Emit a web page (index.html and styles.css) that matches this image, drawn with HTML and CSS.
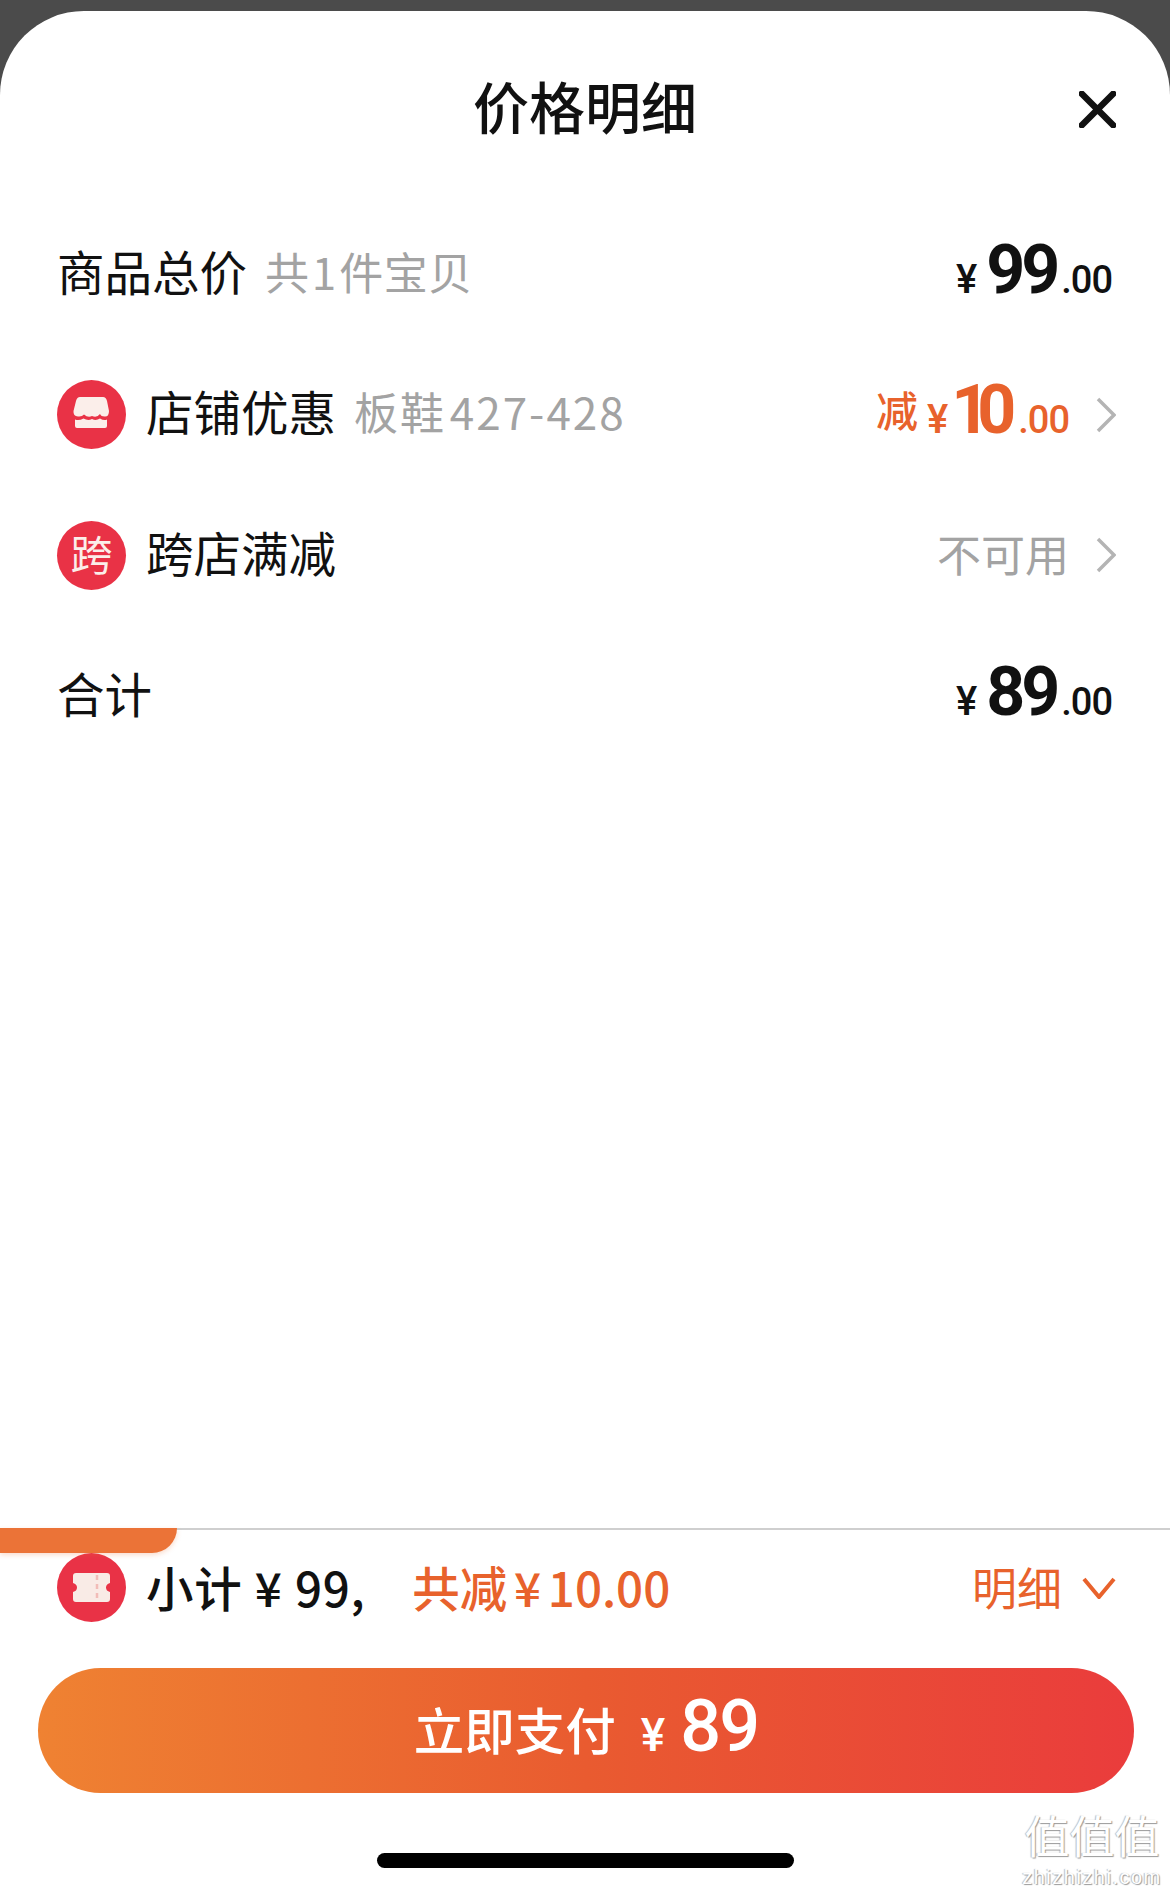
FILE: index.html
```html
<!DOCTYPE html>
<html lang="zh-CN">
    <head>
        <meta charset="utf-8" />
        <title>价格明细</title>
        <link rel="stylesheet" href="styles.css">
    </head>
    <body>
        <div class="sheet">
            <div class="sheet-head">
                <h1 class="sheet-tit">价格明细</h1>
                <svg class="close" viewBox="0 0 40 40"><path d="M3 3 L37 37 M37 3 L3 37" /></svg>
            </div>

            <div class="row">
                <span class="row-name">商品总价</span>
                <span class="row-sub">共 1 件宝贝</span>
                <span class="price">
                    <span class="yen">¥</span><span class="int">99</span><span class="dec">.00</span>
                </span>
            </div>

            <div class="row">
                <svg class="badge" viewBox="0 0 69 69">
                    <circle cx="34.5" cy="34.5" r="34.5" fill="#e93246" />
                    <path fill="#fbeeea" d="M23 17 H46 Q49 17 50 21 L52 31 Q52 37 47.500 36.500 Q44 36.500 43 34 Q40 38 35 36 Q31 38 27 34.500 Q25 37 21 36.500 Q16 36 16.500 31 L19 21 Q20 17 23 17 Z" />
                    <path fill="#fbeeea" d="M18 39.500 Q22 41 26.500 38.500 Q31 41 35 39 Q39 41 43 38.500 Q47 41 50 39.500 V46 Q50 48 48 48 H20 Q18 48 18 46 Z" />
                </svg>
                <span class="row-name">店铺优惠</span>
                <span class="row-sub row-sub-num">板鞋 427-428</span>
                <span class="price price-off">
                    <span class="off">减</span><span class="yen">¥</span><span class="int int-one">10</span><span class="dec">.00</span>
                </span>
                <svg class="arrow" viewBox="0 0 20 36"><path d="M2 2 L18 18 L2 34" /></svg>
            </div>

            <div class="row">
                <span class="badge badge-txt">跨</span>
                <span class="row-name">跨店满减</span>
                <span class="row-none">不可用</span>
                <svg class="arrow" viewBox="0 0 20 36"><path d="M2 2 L18 18 L2 34" /></svg>
            </div>

            <div class="row">
                <span class="row-name">合计</span>
                <span class="price">
                    <span class="yen">¥</span><span class="int">89</span><span class="dec">.00</span>
                </span>
            </div>

            <div class="foot">
                <div class="foot-tab"></div>
                <div class="summary">
                    <svg class="badge" viewBox="0 0 69 69">
                        <circle cx="34.5" cy="34.5" r="34.5" fill="#e93246" />
                        <path fill="#f9ebe6" d="M19 20 H50 Q53 20 53 23 V30 Q49 31 49 34.500 Q49 38 53 39 V46 Q53 49 50 49 H19 Q16 49 16 46 V39 Q20 38 20 34.500 Q20 31 16 30 V23 Q16 20 19 20 Z" />
                        <path stroke="#f2bcb8" stroke-width="2.500" stroke-dasharray="5 4" d="M40 22 V48" />
                    </svg>
                    <span class="sum-total">小计 ¥ 99,</span>
                    <span class="sum-off">共减 ¥ 10.00</span>
                    <span class="sum-more">明细</span>
                    <svg class="sum-arrow" viewBox="0 0 34 22"><path d="M2 2 L17 20 L32 2" /></svg>
                </div>
                <div class="pay">
                    <span class="pay-txt">立即支付</span><span class="pay-yen">¥</span><span class="pay-num">89</span>
                </div>
                <div class="home-bar"></div>
            </div>

            <div class="mark">
                <div class="mark-cn">值值值</div>
                <div class="mark-en">zhizhizhi.com</div>
            </div>
        </div>
    </body>
</html>
```

FILE: styles.css
```css
* {
    margin: 0;
    padding: 0;
    box-sizing: border-box;
}

body {
    width: 1170px;
    height: 1892px;
    overflow: hidden;
    padding-top: 11px;
    background-color: #4b4b4b;
    color: #111;
    font-family: "Noto Sans CJK SC", "Liberation Sans", sans-serif;
}

.sheet {
    position: relative;
    display: flex;
    flex-direction: column;
    height: 1881px;
    overflow: hidden;
    border-radius: 84px 84px 0 0;
    background-color: #fff;
}

.sheet-head {
    position: relative;
    display: flex;
    justify-content: center;
    align-items: center;
    height: 193px;
    padding-bottom: 4px;
}

.sheet-tit {
    font-size: 56px;
    font-weight: 500;
    line-height: 70px;
    margin-top: -2px;
}

.close {
    position: absolute;
    top: 80px;
    right: 54px;
    width: 37px;
    height: 37px;
    fill: none;
    stroke: #111;
    stroke-width: 7;
    stroke-linecap: round;
}

.row {
    display: flex;
    align-items: center;
    height: 140.6px;
    padding: 0 54px 0 57px;
}

.row-name {
    margin-bottom: 7px;
    font-size: 47.500px;
    line-height: 60px;
}

.row-sub {
    margin-left: 18px;
    margin-bottom: 7px;
    color: #a3a3a3;
    font-size: 44px;
    line-height: 60px;
    letter-spacing: 0.500px;
    word-spacing: -8px;
}

.row-sub-num {
    letter-spacing: 2px;
}

.row-none {
    margin-left: auto;
    margin-bottom: 4px;
    color: #a3a3a3;
    font-size: 44px;
    line-height: 60px;
}

.badge {
    flex: none;
    width: 69px;
    height: 69px;
    margin-right: 20px;
}

.badge-txt {
    border-radius: 50%;
    background-color: #e93246;
    color: #fbeeea;
    font-size: 42px;
    line-height: 64px;
    text-align: center;
}

.price {
    display: flex;
    align-items: baseline;
    margin-left: auto;
    margin-bottom: 9px;
    padding-right: 4px;
    font-family: "Roboto", "Liberation Sans", sans-serif;
    font-weight: 700;
}

.yen {
    font-size: 40px;
    font-weight: 500;
    margin-right: 9px;
}

.int {
    font-size: 68px;
    line-height: 80px;
    letter-spacing: -4px;
}

.int-one {
    margin-left: -6px;
    margin-right: 10px;
    letter-spacing: -13px;
}

.dec {
    font-size: 38px;
    font-weight: 500;
    margin-left: 5px;
    letter-spacing: -1px;
}

.price-off {
    padding-right: 0;
    color: #e8622c;
}

.off {
    margin-right: 9px;
    font-family: "Noto Sans CJK SC", sans-serif;
    font-size: 42px;
    font-weight: 500;
    transform: translateY(-6px);
}

.arrow {
    flex: none;
    width: 20px;
    height: 36px;
    margin-left: 27px;
    fill: none;
    stroke: #b4b4b4;
    stroke-width: 3.500;
}

.foot {
    position: relative;
    margin-top: auto;
    height: 364px;
    border-top: 2px solid #cfcfcf;
}

.foot-tab {
    position: absolute;
    top: -2px;
    left: 0;
    width: 177px;
    height: 25px;
    border-radius: 0 0 28px 0;
    background-color: #eb7337;
    box-shadow: 0 2px 5px rgba(235, 115, 55, 0.25);
}

.summary {
    display: flex;
    align-items: center;
    height: 69px;
    margin-top: 23px;
    padding: 0 54px 0 57px;
}

.sum-total {
    margin-bottom: 3px;
    font-size: 47.500px;
    font-weight: 500;
    letter-spacing: 0.700px;
    word-spacing: 1px;
}

.sum-off {
    margin-left: 47px;
    margin-bottom: 3px;
    color: #e8622c;
    font-size: 47.500px;
    font-weight: 500;
    word-spacing: -4px;
}

.sum-more {
    margin-left: auto;
    margin-bottom: 3px;
    color: #e8622c;
    font-size: 45px;
}

.sum-arrow {
    flex: none;
    width: 34px;
    height: 22px;
    margin-left: 20px;
    fill: none;
    stroke: #e8622c;
    stroke-width: 4;
}

.pay {
    display: flex;
    justify-content: center;
    align-items: center;
    width: 1096px;
    height: 125px;
    margin: 46px 0 0 38px;
    border-radius: 63px;
    background: linear-gradient(90deg, #ef8232, #e95b30 50%, #ea3c3c 100%);
    color: #fff;
}

.pay-txt {
    margin-bottom: 6px;
    font-size: 50.500px;
    font-weight: 500;
}

.pay-yen {
    margin-left: 25px;
    margin-top: 8px;
    font-family: "Roboto", sans-serif;
    font-size: 46px;
    font-weight: 500;
}

.pay-num {
    margin-left: 15px;
    margin-bottom: 8px;
    font-family: "Roboto", sans-serif;
    font-size: 72px;
    font-weight: 500;
    line-height: 80px;
    letter-spacing: -2px;
}

.home-bar {
    width: 417px;
    height: 15px;
    margin: 60px auto 0;
    border-radius: 8px;
    background-color: #000;
}

.mark {
    position: absolute;
    right: 8px;
    bottom: 6px;
    width: 140px;
    text-align: center;
    color: #fff;
    text-shadow: 1px 1px 1px #999, -1px 0 1px #bbb;
}

.mark-cn {
    margin-bottom: 10px;
    font-size: 45px;
    line-height: 46px;
}

.mark-en {
    font-family: "Liberation Sans", sans-serif;
    font-size: 20px;
    line-height: 18px;
    letter-spacing: 1.500px;
}
```
